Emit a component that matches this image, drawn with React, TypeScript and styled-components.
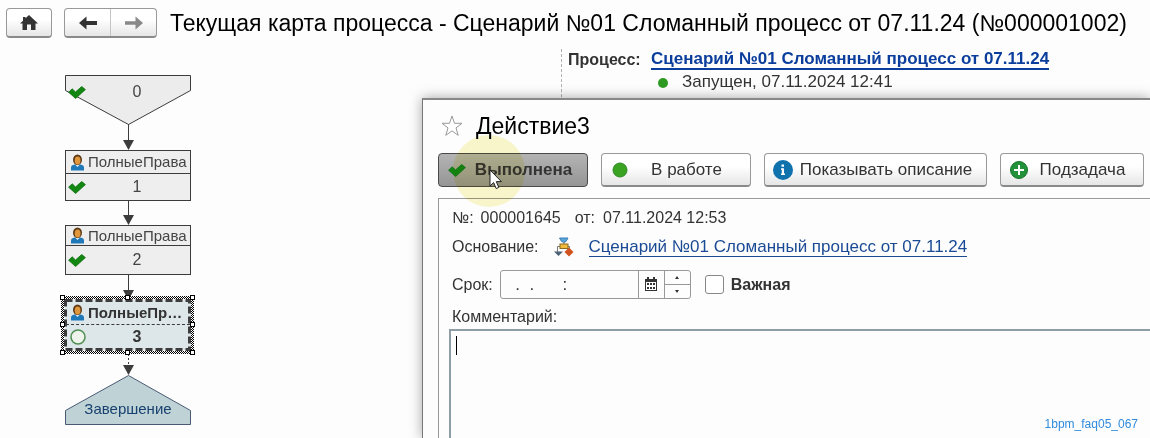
import React from "react";
import styled, { createGlobalStyle, css } from "styled-components";

const GlobalStyle = createGlobalStyle`
  * { box-sizing: border-box; }
  body {
    margin: 0;
    background: #fdfdfd;
    color: #333;
    font-family: "Liberation Sans", Arial, sans-serif;
    font-size: 16px;
    line-height: 20px;
  }
  button, input, textarea { font: inherit; color: inherit; margin: 0; }
`;

const Page = styled.div`
  display: flex;
  flex-direction: column;
  min-height: 100vh;
  overflow: hidden;
`;

const Header = styled.header`
  display: flex;
  align-items: center;
  height: 48px;
  padding: 0 6px 2px;
`;

const raised = css`
  border: 1px solid #999;
  border-bottom: 2px solid #8a8a8a;
  border-radius: 4px;
  background: linear-gradient(#fff 40%, #e6e6e6);
`;

const HomeButton = styled.button`
  ${raised}
  display: grid;
  place-items: center;
  width: 46px;
  height: 30px;
  padding: 0;
`;

const NavGroup = styled.div`
  ${raised}
  display: flex;
  width: 93px;
  height: 30px;
  margin: 0 13px 0 12px;
`;

const NavButton = styled.button`
  display: grid;
  place-items: center;
  flex: 1;
  padding: 0;
  border: 0;
  background: none;
  & + & { border-left: 1px solid #c4c4c4; }
`;

const PageTitle = styled.h1`
  margin: 0;
  font-size: 23px;
  line-height: 28px;
  font-weight: 400;
  color: #000;
  white-space: nowrap;
`;

const Workspace = styled.main`
  position: relative;
  display: flex;
  flex: 1;
`;

const Canvas = styled.section`
  position: relative;
  flex: 0 0 561px;
  min-height: 390px;
`;

const Links = styled.svg`
  position: absolute;
  left: 0;
  top: 0;
`;

const Node = styled.div<{ $top: number; $height: number }>`
  position: absolute;
  left: 65px;
  top: ${(p) => p.$top}px;
  width: 126px;
  height: ${(p) => p.$height}px;
  color: #444;
`;

const TaskNode = styled(Node)<{ $head: number; $active?: boolean }>`
  display: grid;
  grid-template-rows: ${(p) => p.$head}px 1fr;
  border: 1px solid #3c3c3c;
  background: #eeeeee;
  ${(p) =>
    p.$active &&
    css`
      border-color: transparent;
      background: #dde6e8;
      font-weight: 700;
      color: #333;
    `}
`;

const TaskHead = styled.div<{ $active?: boolean }>`
  display: flex;
  align-items: center;
  gap: 3px;
  padding-left: 4px;
  border-bottom: 1px ${(p) => (p.$active ? "dashed" : "solid")} #3c3c3c;
  svg { flex: none; }
`;

const TaskName = styled.span`
  font-size: 15px;
  white-space: nowrap;
`;

const TaskFoot = styled.div`
  display: grid;
  grid-template-columns: 20px 1fr;
  align-items: center;
  padding: 0 4px 0 2px;
  text-align: center;
`;

const StartLabel = styled(Node)`
  display: grid;
  grid-template-columns: 20px 1fr;
  align-items: center;
  padding: 0 5px 0 3px;
  text-align: center;
`;

const EndLabel = styled(Node)`
  display: grid;
  place-items: center;
  font-size: 15px;
  color: #17406f;
`;

const ProcessInfo = styled.section`
  flex: 1;
  margin-top: 1px;
  padding-left: 6px;
  border-left: 1px dashed #b0b0b0;
  white-space: nowrap;
`;

const InfoRow = styled.div`
  display: flex;
  align-items: center;
  height: 22px;
`;

const InfoLabel = styled.span`
  width: 83px;
  font-weight: 700;
`;

const InfoText = styled.span`
  font-size: 17px;
`;

const Link = styled.a<{ $bold?: boolean }>`
  color: ${(p) => (p.$bold ? "#0a3d9c" : "#1a4a94")};
  font-size: 17px;
  font-weight: ${(p) => (p.$bold ? 700 : 400)};
  text-decoration: none;
  border-bottom: ${(p) => (p.$bold ? 2 : 1)}px solid;
  line-height: 18px;
`;

const StatusDot = styled.span`
  width: 10px;
  height: 10px;
  margin: 2px 14px 0 90px;
  border-radius: 50%;
  background: #2f9a22;
`;

const Dialog = styled.section`
  position: absolute;
  left: 422px;
  right: 0;
  top: 50px;
  bottom: 0;
  display: flex;
  flex-direction: column;
  padding: 11px 0 0 15px;
  border: solid #777;
  border-width: 2px 0 0 1px;
  border-top-color: #888;
  background: #fdfdfd;
  box-shadow: 0 0 12px rgba(0, 0, 0, 0.35);
`;

const DialogHead = styled.div`
  display: flex;
  align-items: center;
  gap: 13px;
  height: 30px;
  padding-left: 3px;
`;

const DialogTitle = styled.h2`
  margin: 0;
  font-size: 23px;
  line-height: 28px;
  font-weight: 400;
  color: #000;
`;

const Toolbar = styled.div`
  position: relative;
  display: flex;
  gap: 13px;
  margin-top: 12px;
`;

const ToolButton = styled.button<{ $width: number; $pressed?: boolean }>`
  ${raised}
  display: grid;
  grid-template-columns: 20px 1fr;
  align-items: center;
  flex: none;
  width: ${(p) => p.$width}px;
  height: 34px;
  padding: 0 7px 0 8px;
  font-size: 17px;
  white-space: nowrap;
  ${(p) =>
    p.$pressed &&
    css`
      border: 1px solid #4a4a4a;
      background: linear-gradient(#b4b4b4, #959595);
      font-weight: 700;
    `}
  svg { justify-self: center; }
`;

const ClickHalo = styled.span`
  position: absolute;
  left: 15px;
  top: -18px;
  width: 72px;
  height: 72px;
  border-radius: 50%;
  background: #faf7cc;
  mix-blend-mode: multiply;
  pointer-events: none;
`;

const Pointer = styled.svg`
  position: absolute;
  left: 51px;
  top: 16px;
  pointer-events: none;
`;

const Form = styled.form`
  display: flex;
  flex-direction: column;
  flex: 1;
  margin-top: 11px;
  padding: 7px 0 0 10px;
  border: solid #999;
  border-width: 1px 0 0 1px;
`;

const FormRow = styled.div<{ $height: number }>`
  display: flex;
  align-items: center;
  height: ${(p) => p.$height}px;
  padding-left: 3px;
  white-space: nowrap;
`;

const FieldText = styled.span<{ $gap: number }>`
  margin-right: ${(p) => p.$gap}px;
`;

const FieldLabel = styled.label`
  margin-right: 7px;
`;

const DateField = styled.div`
  display: flex;
  width: 191px;
  height: 29px;
  border: 1px solid #999;
  border-radius: 3px;
`;

const DateInput = styled.input`
  width: 137px;
  padding: 0 0 0 5px;
  border: 0;
  background: none;
  font-size: 17px;
  outline: none;
`;

const PickButton = styled.button`
  display: grid;
  place-items: center;
  width: 26px;
  padding: 0 0 2px;
  border: 0;
  border-left: 1px solid #999;
  background: none;
`;

const Stepper = styled.div`
  display: flex;
  flex-direction: column;
  flex: 1;
  border-left: 1px solid #999;
`;

const StepButton = styled.button`
  display: grid;
  place-items: center;
  flex: 1;
  padding: 0;
  border: 0;
  background: none;
  & + & { border-top: 1px solid #999; }
`;

const CheckBox = styled.input`
  appearance: none;
  width: 19px;
  height: 19px;
  margin: 0 7px 0 14px;
  border: 1px solid #888;
  border-radius: 3px;
  background: #fff;
`;

const CheckLabel = styled.label`
  font-weight: 700;
`;

const CommentBox = styled.div`
  position: relative;
  display: flex;
  flex: 1;
`;

const CommentInput = styled.textarea`
  flex: 1;
  padding: 4px 6px;
  border: solid #8f9ea6;
  border-width: 2px 0 0 2px;
  background: #fdfdfd;
  outline: none;
  resize: none;
`;

const Caret = styled.span`
  position: absolute;
  left: 7px;
  top: 7px;
  width: 1px;
  height: 19px;
  background: #000;
`;

const Watermark = styled.span`
  position: absolute;
  right: 12px;
  bottom: 6px;
  font-size: 12px;
  line-height: 16px;
  color: #2f8bdc;
`;

const Check = () => (
  <svg width="18" height="13" viewBox="0 0 18 13">
    <path d="M.6 6.200 L4.200 2.800 L7.500 6 L13.700 .5 L17.400 3.600 L7.600 12.500 Z" fill="#128712" stroke="#0d6f10" strokeWidth=".8" strokeLinejoin="round" />
  </svg>
);

const Person = () => (
  <svg width="15" height="17" viewBox="0 0 15 17">
    <path d="M1 16.500V13.500Q1 11 4.500 10.500H10.500Q14 11 14 13.500V16.500Z" fill="#1f78b8" />
    <path d="M5 10.500L7.500 13L10 10.500Z" fill="#d8eaf5" />
    <ellipse cx="7.500" cy="5.800" rx="4.500" ry="5.300" fill="#5f3a16" />
    <ellipse cx="7.600" cy="6.600" rx="2.900" ry="4" fill="#e0963a" />
  </svg>
);

const Diagram = () => (
  <Links width="220" height="390" viewBox="0 48 220 390" fill="none" stroke="#3c3c3c">
    <path d="M65.500 75.500H190.500V90.500L128.500 124.500L65.500 90.500Z" fill="#ececec" />
    <path d="M128.500 124V142M128.500 200V217M128.500 275V292" />
    <path d="M128.500 354V366" strokeDasharray="2 2" />
    <g fill="#3c3c3c" stroke="none">
      <path d="M123 140H134L128.500 150Z" />
      <path d="M123 215H134L128.500 225Z" />
      <path d="M123 290H134L128.500 300Z" />
      <path d="M123 365H134L128.500 375Z" />
    </g>
    <path d="M128.500 375.500L190.500 410.500V424.500H65.500V410.500Z" fill="#bfd3d6" stroke="#4a5a74" />
  </Links>
);

const handles = [0, 65, 130].flatMap((x) => [0, 27, 55].map((y) => [x, y])).filter(([x, y]) => !(x === 65 && y === 27));

const Selection = () => (
  <Links width="220" height="390" viewBox="0 48 220 390">
    <defs>
      <pattern id="dots" width="2" height="2" patternUnits="userSpaceOnUse">
        <rect width="2" height="2" fill="#fff" />
        <rect width="1" height="1" fill="#000" />
        <rect x="1" y="1" width="1" height="1" fill="#000" />
      </pattern>
    </defs>
    <path d="M61 296H194V354H61ZM64 299V351H191V299Z" fillRule="evenodd" fill="url(#dots)" />
    <rect x="65.500" y="300.500" width="124" height="49" fill="none" stroke="#3c3c3c" strokeWidth="3" strokeDasharray="7 3" />
    {handles.map(([x, y]) => (
      <rect key={`${x}-${y}`} x={x + 60.5} y={y + 295.5} width="4" height="4" fill="#fff" stroke="#000" />
    ))}
  </Links>
);

const Task = ({ top, height, head, no, name, active }: { top: number; height: number; head: number; no: string; name: string; active?: boolean }) => (
  <TaskNode $top={top} $height={height} $head={head} $active={active}>
    <TaskHead $active={active}>
      <Person />
      <TaskName>{name}</TaskName>
    </TaskHead>
    <TaskFoot>
      {active ? (
        <svg width="18" height="18" viewBox="0 0 18 18">
          <circle cx="10" cy="9" r="7" fill="#eef4ec" stroke="#4f8f52" strokeWidth="1.500" />
        </svg>
      ) : (
        <Check />
      )}
      <span>{no}</span>
    </TaskFoot>
  </TaskNode>
);

export default function App() {
  return (
    <>
      <GlobalStyle />
      <Page>
        <Header>
          <HomeButton aria-label="Начальная страница">
            <svg width="18" height="16" viewBox="0 0 18 16">
              <path d="M9 0L18 8.500H15.500V15H11V9.500H7V15H2.500V8.500H0L3 5.700V2H5.500V3.300Z" fill="#333" />
            </svg>
          </HomeButton>
          <NavGroup>
            <NavButton aria-label="Назад">
              <svg width="18" height="14" viewBox="0 0 18 14">
                <path d="M0 7L7.500 .5V5H18V9H7.500V13.500Z" fill="#333" />
              </svg>
            </NavButton>
            <NavButton aria-label="Вперед">
              <svg width="18" height="14" viewBox="0 0 18 14">
                <path d="M18 7L10.500 .5V5.200H0V8.800H10.500V13.500Z" fill="#888" />
              </svg>
            </NavButton>
          </NavGroup>
          <PageTitle>Текущая карта процесса - Сценарий №01 Сломанный процесс от 07.11.24 (№000001002)</PageTitle>
        </Header>
        <Workspace>
          <Canvas>
            <Diagram />
            <StartLabel $top={33} $height={22}>
              <Check />
              <span>0</span>
            </StartLabel>
            <Task top={102} height={51} head={23} no="1" name="ПолныеПрава" />
            <Task top={177} height={50} head={20} no="2" name="ПолныеПрава" />
            <Task top={252} height={50} head={24} no="3" name="ПолныеПр…" active />
            <Selection />
            <EndLabel $top={350} $height={22}>Завершение</EndLabel>
          </Canvas>
          <ProcessInfo>
            <InfoRow>
              <InfoLabel>Процесс:</InfoLabel>
              <Link href="#process" $bold>Сценарий №01 Сломанный процесс от 07.11.24</Link>
            </InfoRow>
            <InfoRow>
              <StatusDot />
              <InfoText>Запущен, 07.11.2024 12:41</InfoText>
            </InfoRow>
          </ProcessInfo>
          <Dialog>
            <DialogHead>
              <svg width="22" height="22" viewBox="0 0 22 22">
                <path d="M11 1L13.500 8.300H21L15 12.900L17.200 20.300L11 15.900L4.800 20.300L7 12.900L1 8.300H8.500Z" fill="#fff" stroke="#999" />
              </svg>
              <DialogTitle>Действие3</DialogTitle>
            </DialogHead>
            <Toolbar>
              <ToolButton $width={150} $pressed>
                <Check />
                <span>Выполнена</span>
              </ToolButton>
              <ToolButton $width={150}>
                <svg width="16" height="16" viewBox="0 0 16 16">
                  <circle cx="8" cy="8" r="7" fill="#3aa322" stroke="#2f8a2a" />
                </svg>
                <span>В работе</span>
              </ToolButton>
              <ToolButton $width={223}>
                <svg width="20" height="20" viewBox="0 0 20 20">
                  <circle cx="10" cy="10" r="10" fill="#0f72ad" />
                  <path d="M8.500 4.500H11V6.700H8.500ZM8 8.300H11V13.500H12V15H8V13.500H8.800V9.800H8Z" fill="#fff" />
                </svg>
                <span>Показывать описание</span>
              </ToolButton>
              <ToolButton $width={144}>
                <svg width="18" height="18" viewBox="0 0 18 18">
                  <circle cx="9" cy="9" r="8.500" fill="#23913a" stroke="#16752b" />
                  <path d="M9 4V14M4 9H14" stroke="#fff" strokeWidth="2" />
                </svg>
                <span>Подзадача</span>
              </ToolButton>
              <ClickHalo />
              <Pointer width="14" height="22" viewBox="0 0 14 22">
                <path d="M1 1V17L4.600 13.600L7.200 19.600L9.800 18.400L7.300 12.600H12.400Z" fill="#fff" stroke="#222" />
              </Pointer>
            </Toolbar>
            <Form>
              <FormRow $height={24}>
                <FieldText $gap={7}>№:</FieldText>
                <FieldText $gap={14}>000001645</FieldText>
                <FieldText $gap={8}>от:</FieldText>
                <span>07.11.2024 12:53</span>
              </FormRow>
              <FormRow $height={34}>
                <FieldText $gap={15}>Основание:</FieldText>
                <svg width="20" height="20" viewBox="0 0 20 20">
                  <path d="M5.500 1H14L12 4.500Q10 6 7.500 4.500Z" fill="#5aa6dc" stroke="#3d7fb2" />
                  <path d="M10 5V7M3.500 15V9.500H6M13 9.500H15.500V13" fill="none" stroke="#777" />
                  <rect x="6" y="7" width="8" height="4.500" fill="#f0b93c" stroke="#8a6a1e" />
                  <path d="M0 14.500H9L4.500 19Z" fill="#4a6274" />
                  <path d="M15 10.500L19.500 15L15 19.500L10.500 15Z" fill="#d2521e" />
                </svg>
                <FieldText $gap={15} />
                <Link href="#basis">Сценарий №01 Сломанный процесс от 07.11.24</Link>
              </FormRow>
              <FormRow $height={41}>
                <FieldLabel htmlFor="due">Срок:</FieldLabel>
                <DateField>
                  <DateInput id="due" defaultValue="  .  .      :" />
                  <PickButton type="button" aria-label="Выбрать дату">
                    <svg width="12" height="14" viewBox="0 0 12 14">
                      <path d="M0 2H12V14H0Z" fill="#333" />
                      <path d="M2 0H4V3H2ZM8 0H10V3H8Z" fill="#333" />
                      <path d="M1 5H11V13H1Z" fill="#fff" />
                      <path d="M2 6H4V8H2ZM5 6H7V8H5ZM8 6H10V8H8ZM2 10H4V12H2ZM5 10H7V12H5ZM8 10H10V12H8Z" fill="#333" />
                    </svg>
                  </PickButton>
                  <Stepper>
                    <StepButton type="button" aria-label="Увеличить">
                      <svg width="4" height="3" viewBox="0 0 4 3"><path d="M0 3L2 0L4 3Z" fill="#333" /></svg>
                    </StepButton>
                    <StepButton type="button" aria-label="Уменьшить">
                      <svg width="4" height="3" viewBox="0 0 4 3"><path d="M0 0L2 3L4 0Z" fill="#333" /></svg>
                    </StepButton>
                  </Stepper>
                </DateField>
                <CheckBox type="checkbox" id="important" />
                <CheckLabel htmlFor="important">Важная</CheckLabel>
              </FormRow>
              <FormRow $height={24}>
                <label htmlFor="comment">Комментарий:</label>
              </FormRow>
              <CommentBox>
                <CommentInput id="comment" />
                <Caret />
              </CommentBox>
            </Form>
            <Watermark>1bpm_faq05_067</Watermark>
          </Dialog>
        </Workspace>
      </Page>
    </>
  );
}
